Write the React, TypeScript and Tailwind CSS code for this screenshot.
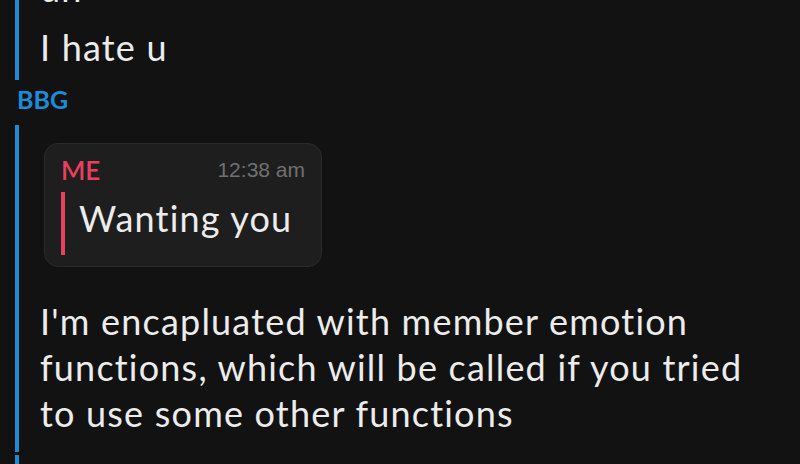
import React from "react";

export default function App() {
  const font = { fontFamily: "Lato, 'Noto Sans', sans-serif" };
  return (
    <div
      className="w-[800px] h-[464px] overflow-hidden bg-[#121212] text-[#ececec]"
      style={font}
    >
      <div className="-mt-[41px] pl-[15px]">
        {/* previous group */}
        <div className="border-l-4 border-[#1f8ad8] pl-[21px] pt-[6px] pb-[10px]">
          <div className="text-[36px] leading-[46px] tracking-[1.2px]">uh</div>
          <div className="text-[36px] leading-[46px] mt-[13px] tracking-[1.2px]">I hate u</div>
        </div>
        {/* sender */}
        <div className="pl-[2px] pt-[5px] pb-[12px] text-[25px] leading-[28px] font-bold text-[#1f8ad8]">
          BBG
        </div>
        {/* current group */}
        <div className="border-l-4 border-[#1f8ad8] pl-[21px] pt-[18px] pb-[16px]">
          <div className="w-[278px] h-[124px] ml-[4px] rounded-[14px] bg-[#1e1e1f] border border-[#2a2a2b] px-[16px] pt-[10px]">
            <div className="flex items-center justify-between">
              <span className="text-[26px] leading-[32px] font-semibold text-[#e8405e]">ME</span>
              <span
                className="text-[21px] leading-[32px] text-[#707070]"
                style={{ fontFamily: "'Liberation Sans', Arial, sans-serif" }}
              >
                12:38 am
              </span>
            </div>
            <div className="flex items-stretch mt-[6px]">
              <div className="w-[4px] h-[63px] bg-[#e8405e]" />
              <div className="pl-[14px] text-[36px] leading-[52px] tracking-[1.2px]">Wanting you</div>
            </div>
          </div>
          <div className="mt-[31px] text-[36px] leading-[46px] tracking-[1.2px] w-[760px]">
            I'm encapluated with member emotion
            <br />
            functions, which will be called if you tried
            <br />
            to use some other functions
          </div>
        </div>
        <div className="mt-[3px] h-[30px] border-l-4 border-[#1f8ad8]" />
      </div>
    </div>
  );
}
